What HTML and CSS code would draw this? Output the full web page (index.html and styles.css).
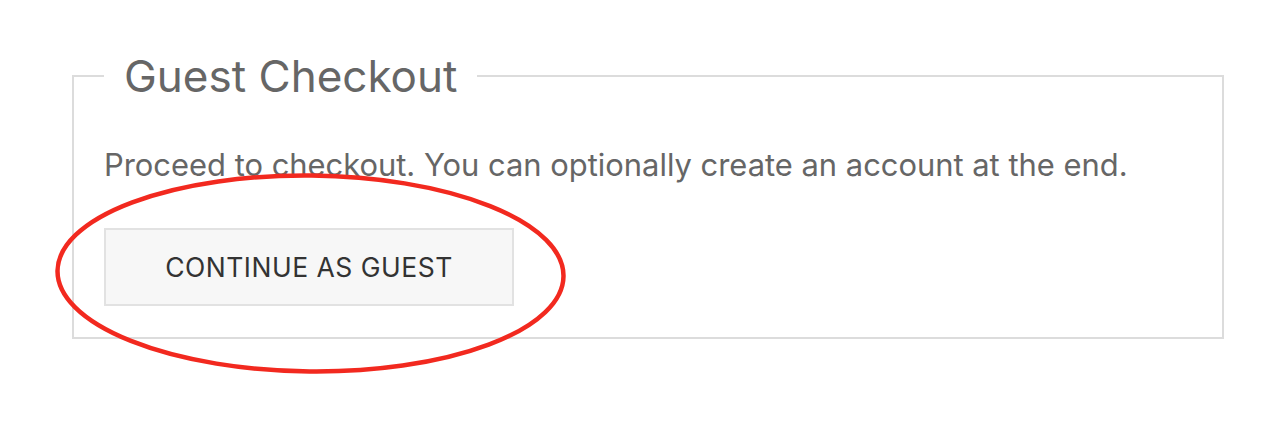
FILE: index.html
```html
<!DOCTYPE html>
<html>
<head>
<meta charset="utf-8">
<link rel="stylesheet" href="styles.css">
</head>
<body>
<div class="page">
  <fieldset class="box">
    <legend class="title">Guest Checkout</legend>
    <p class="lead">Proceed to checkout. You can optionally create an account at the end.</p>
    <button class="btn" type="button">CONTINUE AS GUEST</button>
  </fieldset>
  <svg class="mark" width="1282" height="424" viewBox="0 0 1282 424">
    <ellipse cx="310.5" cy="273.5" rx="253" ry="98" fill="none" stroke="#f2291f" stroke-width="4.5" transform="rotate(0.6 310.5 273.5)"/>
  </svg>
</div>
</body>
</html>
```

FILE: styles.css
```css
html, body {
  margin: 0;
  padding: 0;
  background: #fff;
}
.page {
  position: relative;
  width: 1282px;
  height: 424px;
  padding-top: 52px;
  box-sizing: border-box;
  font-family: Inter, "Noto Sans", sans-serif;
}
.box {
  margin: 0 0 0 72px;
  width: 1152px;
  box-sizing: border-box;
  border: 2px solid #dcdcdc;
  padding: 0 30px 31px 30px;
  min-width: 0;
}
.title {
  padding: 0 20px;
  font-size: 44px;
  font-weight: 400;
  color: #666;
  line-height: 48px;
}
.lead {
  margin: 45px 0 43px 0;
  font-size: 30.9px;
  color: #666;
  line-height: 40px;
}
.btn {
  display: block;
  box-sizing: border-box;
  width: 410px;
  height: 78px;
  background: #f7f7f7;
  border: 2px solid #e2e2e2;
  font-family: Inter, "Noto Sans", sans-serif;
  font-size: 26.5px;
  color: #333;
  letter-spacing: 0.5px;
  padding: 0;
}
.mark {
  position: absolute;
  left: 0;
  top: 0;
  pointer-events: none;
}
```
